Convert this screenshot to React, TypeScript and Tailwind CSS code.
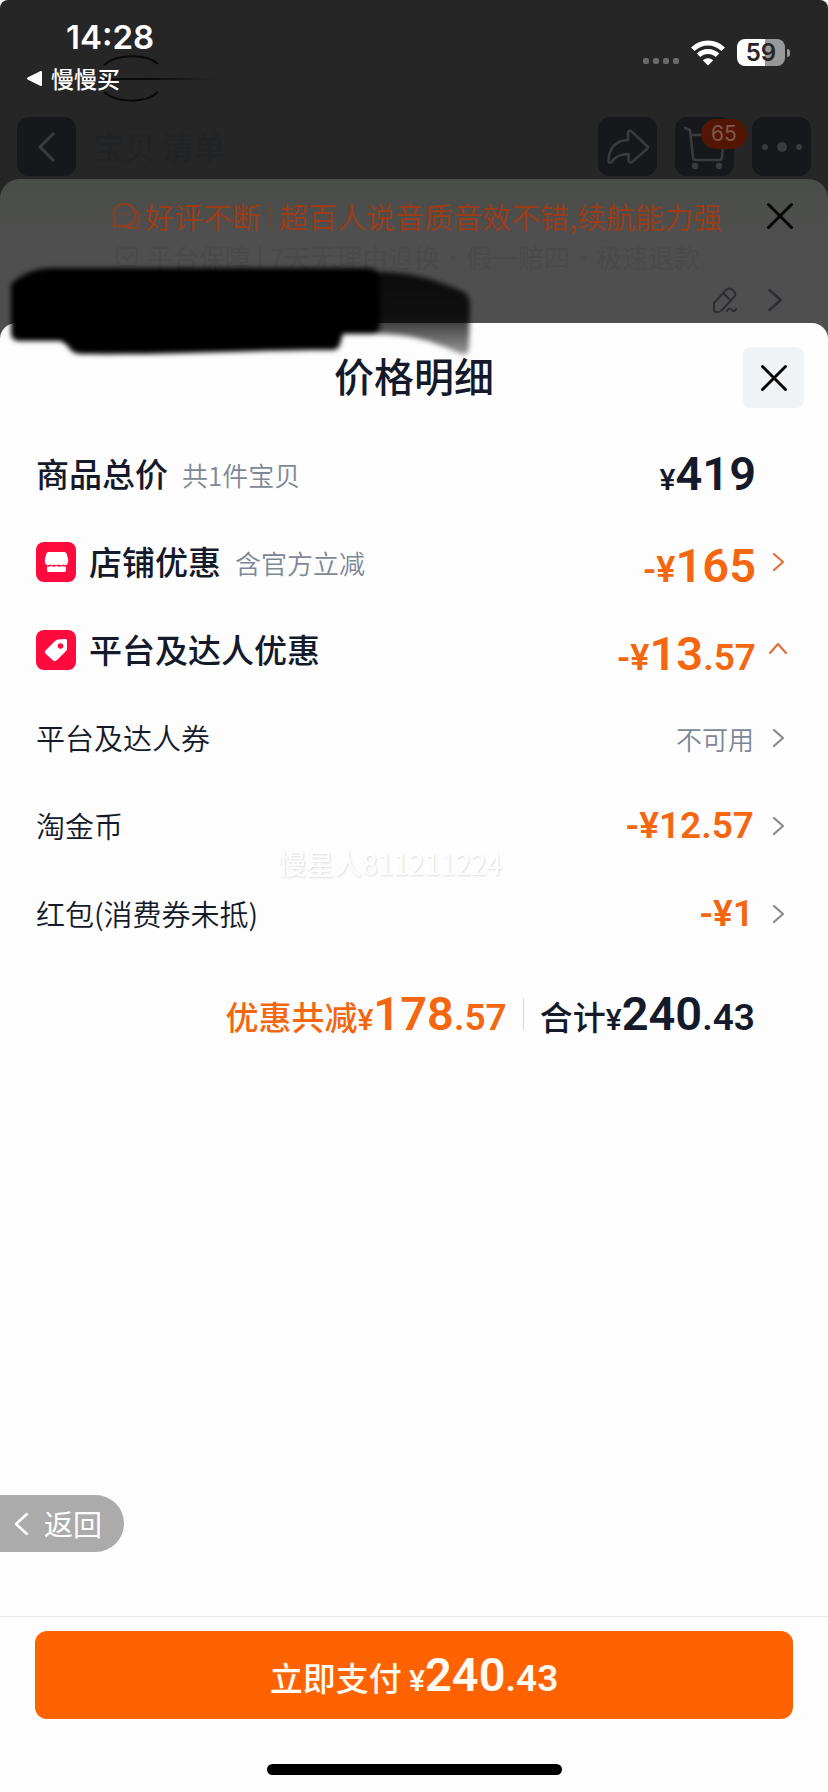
import type { ReactNode } from "react";
import clsx from "clsx";

type PriceProps = {
  sign?: string;
  integer: string;
  decimal?: string;
};

// valor com a parte inteira maior que os centavos
const Price = ({ sign = "¥", integer, decimal }: PriceProps) => (
  <span className="font-['Roboto','Noto_Sans_CJK_SC',sans-serif] font-semibold whitespace-nowrap">
    <span className={sign === "¥" ? "text-[30px] font-medium" : "text-[36px]"}>{sign}</span>
    <span className="text-[47px]">{integer}</span>
    {decimal && <span className="text-[37px]">.{decimal}</span>}
  </span>
);

const Chevron = ({ direction = "right", className }: { direction?: "right" | "up"; className?: string }) => (
  <svg viewBox="0 0 24 24" className={clsx("shrink-0", className)} fill="none" stroke="currentColor" strokeWidth="2.2" strokeLinecap="round" strokeLinejoin="round">
    <path d={direction === "right" ? "M6 4l9 8-9 8" : "M2 15l8-9 8 9"} />
  </svg>
);

const Cross = () => (
  <svg viewBox="0 0 28 28" className="size-7" fill="none" stroke="#050505" strokeWidth="3" strokeLinecap="round">
    <path d="M2.500 2.500l23 23M25.500 2.500l-23 23" />
  </svg>
);

const StatusBar = () => (
  <div className="flex justify-between pl-[26px] pr-[38px] h-[117px] text-white">
    <div>
      <div className="pl-10 pt-[17px] h-[62px] font-['Inter',sans-serif] font-semibold text-[33px] leading-[40px]">14:28</div>
      <a href="#" className="flex items-center gap-2 text-[23px] leading-[32px] font-medium">
        <svg viewBox="0 0 17 17" className="size-[17px]" fill="white" stroke="white" strokeWidth="2" strokeLinejoin="round">
          <path d="M2 8.500L15 2v13z" />
        </svg>
        慢慢买
      </a>
    </div>
    <div className="flex items-center gap-3 h-[27px] mt-[39px]">
      <div className="flex gap-1 pt-[17px]">
        {[0, 1, 2, 3].map((dot) => (
          <span key={dot} className="size-[6px] rounded-xs bg-[#6a6a6a]" />
        ))}
      </div>
      <svg viewBox="0 0 34 26" className="w-[34px] h-[26px]" fill="none" stroke="white" strokeWidth="5">
        <path d="M1.800 9.300a21.500 21.500 0 0 1 30.400 0" />
        <path d="M7.500 15.300a13.500 13.500 0 0 1 19 0" />
        <path d="M17 25.500l-5.200-5.200a7.400 7.400 0 0 1 10.400 0z" fill="white" stroke="none" />
      </svg>
      <div className="flex items-center gap-0.5">
        <div className="flex items-center justify-center w-12 h-[27px] rounded-lg bg-linear-to-r from-white from-58% to-[#989898] to-58% text-[#262626] font-['Inter',sans-serif] font-semibold text-[24px] leading-[27px]">
          59
        </div>
        <span className="w-[3px] h-2 rounded-r-full bg-[#989898]" />
      </div>
    </div>
  </div>
);

const NavButton = ({ label, children }: { label: string; children: ReactNode }) => (
  <button aria-label={label} className="relative flex items-center justify-center size-[59px] rounded-xl bg-[#17181b] text-[#3b3b3d]">
    {children}
  </button>
);

const NavBar = () => (
  <nav className="flex items-center gap-[18px] px-[17px] h-[59px]">
    <NavButton label="后退">
      <svg viewBox="0 0 30 30" className="size-[30px]" fill="none" stroke="currentColor" strokeWidth="3">
        <path d="M22 1L8 15l14 14" />
      </svg>
    </NavButton>
    <span className="flex-1 text-[31px] font-medium text-[#222324]">宝贝 清单</span>
    <NavButton label="分享">
      <svg viewBox="0 0 44 36" className="w-11 h-9" fill="none" stroke="currentColor" strokeWidth="2.500" strokeLinejoin="round">
        <path d="M22 4c0-2 2-3 3.500-1.500L41 17c1 1 1 2 0 3L26 33c-1.500 1-3.500 0-3.500-2v-6c-8 0-13 2-17 8-1 1.500-3 1-3-1C3 19 10 11 22 11z" />
      </svg>
    </NavButton>
    <NavButton label="购物车">
      <svg viewBox="0 0 44 44" className="size-11" fill="none" stroke="currentColor" strokeWidth="2.500" strokeLinecap="round" strokeLinejoin="round">
        <path d="M2 3l5 2 3 27c0 2 1 3 3 3h23c2 0 3-1 3-3l2-20M8 10h32" />
        <circle cx="12" cy="41" r="2" fill="currentColor" />
        <circle cx="36" cy="41" r="2" fill="currentColor" />
      </svg>
      <span className="absolute left-[26px] top-[2px] flex items-center justify-center w-[46px] h-[30px] rounded-full bg-[#541604] text-[#80594a] font-['Inter',sans-serif] text-[21px] leading-[30px]">
        65
      </span>
    </NavButton>
    <NavButton label="更多">
      <span className="flex items-center gap-[9px]">
        <span className="size-[6px] rounded-full bg-current" />
        <span className="size-[10px] rounded-full bg-current" />
        <span className="size-[6px] rounded-full bg-current" />
      </span>
    </NavButton>
  </nav>
);

// cartao do pedido que fica escurecido atras do painel
const OrderCard = () => (
  <section className="h-36 rounded-t-[20px] bg-linear-to-b from-[#494d48] to-[#4f4f4f] to-40%">
    <div className="flex items-center pt-3 h-[62px] pr-[34px] pl-[111px]">
      <div className="flex flex-1 items-center text-[29px] leading-[48px] text-[#983c1a] whitespace-nowrap">
        <svg viewBox="0 0 30 28" className="w-[30px] h-7 mr-1 shrink-0" fill="none" stroke="currentColor" strokeWidth="1.800" strokeLinecap="round" strokeLinejoin="round">
          <path d="M3 25l1-6.500a11 11 0 1 1 5 4.500z" />
          <path d="M25.500 9c3.500 4 3.500 9 1 12.500l.500 5-5-1.500c-3 1.500-6 1.500-9-.500" />
          <path d="M9 12h.1M13.500 12h.1M18 12h.1" strokeWidth="2.200" />
        </svg>
        好评不断
        <span className="w-0.5 h-6 mx-2 bg-[#6b4636]" />
        超百人说音质音效不错,续航能力强
      </div>
      <button aria-label="关闭订单">
        <Cross />
      </button>
    </div>
    <p className="flex items-center gap-2 pl-[115px] text-[26px] leading-[32px] text-[#4a4a4a] whitespace-nowrap">
      <svg viewBox="0 0 24 24" className="size-6" fill="none" stroke="currentColor" strokeWidth="2">
        <path d="M2 3h20v13l-4 5H6l-4-5zM8 11l4 4 5-6" />
      </svg>
      平台保障 | 7天无理由退换·假一赔四·极速退款
    </p>
    <div className="flex items-center justify-end gap-6 pt-3 pr-9 text-[#2d2d33]">
      <svg viewBox="0 0 26 26" className="size-[26px]" fill="none" stroke="currentColor" strokeWidth="2" strokeLinecap="round" strokeLinejoin="round">
        <path d="M2 16L14 3c2-2 4-2 6-.500l2 2c2 2 1.500 4 0 5.500L10 23c-1 1.500-2 2-4 2H4c-1.500 0-2-1-2-2zM11 6l8 8M15 24c2-3 3-3 5-1s3 1 4-1" />
      </svg>
      <Chevron className="size-[30px]" />
    </div>
  </section>
);

// rabisco preto que esconde o endereco
const Scribble = () => (
  <svg viewBox="0 0 480 100" className="absolute left-0 top-[262px] w-[480px] h-[100px] pointer-events-none" aria-hidden="true">
    <defs>
      <filter id="soft" x="-5%" y="-10%" width="110%" height="120%">
        <feGaussianBlur stdDeviation="2.500" />
      </filter>
      <linearGradient id="tail" x1="0" y1="0" x2="0" y2="1">
        <stop offset="0" stopColor="#000" stopOpacity="0.850" />
        <stop offset="0.550" stopColor="#000" stopOpacity="0.800" />
        <stop offset="1" stopColor="#000" stopOpacity="0.400" />
      </linearGradient>
    </defs>
    <g filter="url(#soft)">
      <path d="M370 10c35-1 60 5 92 19 6 3 8 8 8 14l-1 40c0 9-3 11-10 8-30-14-54-20-89-19z" fill="url(#tail)" />
      <path d="M11 22C22 12 34 7 50 6h318c8 0 12 5 12 12v45c0 6-4 9-10 9h-27l-3 10c-1 4-4 6-9 6-80 0-160 5-250 4-6 0-11-3-13-8l-7-5H20c-6 0-9-3-9-8z" fill="#000" />
    </g>
  </svg>
);

const StoreIcon = () => (
  <svg viewBox="0 0 40 40" className="size-10 shrink-0" fill="white">
    <rect width="40" height="40" rx="8" fill="#ff0a3c" />
    <path d="M13 10h15c1.500 0 2 .500 2.500 1.500l1.500 5c.500 3 0 5-1 6-1.500 1-3 1-4 0-1.500 1-3 1-4.500 0-1.500 1-3 1-4.500 0-1.500 1-3 1-4 0-1.500 1-3 1-4 0-1-1-1.500-3-1-6l1.500-5c.500-1 1-1.500 2.500-1.500z" />
    <path d="M11 24.500c2 .500 3 0 4-.500 2 1 4 1 5.500 0 2 1 4 1 5.500 0 1 .500 2.500 1 4 .500V28c0 1.500-.500 2-2 2H13c-1.500 0-2-.500-2-2z" />
  </svg>
);

const TagIcon = () => (
  <svg viewBox="0 0 40 40" className="size-10 shrink-0" fill="white">
    <rect width="40" height="40" rx="8" fill="#ff0a3c" />
    <path d="M22 9.500l7-.500c1.500 0 2 .500 2 2v7.500c0 1-.500 2-1 2.500l-9 9c-1.500 1.500-3 1.500-4.500 0L10 24c-1.500-1.500-1.500-2.500 0-4l9-9c1-1 2-1.500 3-1.500z" />
    <circle cx="24.500" cy="16" r="2.800" fill="#ff0a3c" />
  </svg>
);

type RowProps = {
  icon?: ReactNode;
  label: string;
  note?: string;
  value: ReactNode;
  arrow?: ReactNode;
};

const SummaryRow = ({ icon, label, note, value, arrow }: RowProps) => (
  <li className="flex items-center h-[88px] text-[#141a2a]">
    {icon && <span className="mr-[13px]">{icon}</span>}
    <span className="text-[33px] font-medium">{label}</span>
    {note && <span className="ml-[14px] text-[26px] font-[350] text-[#7d8896]">{note}</span>}
    <span className="ml-auto">{value}</span>
    <span className="ml-3 w-6">{arrow}</span>
  </li>
);

const details = [
  { label: "平台及达人券", value: "" },
  { label: "淘金币", value: "-¥12.57" },
  { label: "红包(消费券未抵)", value: "-¥1" },
];

const DetailRow = ({ label, value }: { label: string; value: string }) => (
  <li className="flex items-center h-[88px] text-[#141a2a]">
    <span className="text-[29px] font-[350]">{label}</span>
    {value ? (
      <span className="ml-auto font-['Roboto',sans-serif] font-semibold text-[37px] text-[#f4660f]">{value}</span>
    ) : (
      <span className="ml-auto text-[26px] font-[350] text-[#7d8896]">不可用</span>
    )}
    <Chevron className="size-6 ml-[14px] text-[#8a8a8c]" />
  </li>
);

const PriceSheet = () => (
  <main className="relative flex flex-col flex-1 rounded-t-[16px] bg-[#fdfdfd]">
    <header className="grid grid-cols-[61px_1fr_61px] items-center px-6 pt-6 pb-[22px]">
      <h1 className="col-start-2 pb-1 text-center text-[40px] leading-[57px] font-medium text-[#141a2a]">价格明细</h1>
      <button aria-label="关闭" className="flex items-center justify-center size-[61px] rounded-lg bg-[#f0f3f6]">
        <Cross />
      </button>
    </header>

    <ul className="px-9">
      <SummaryRow label="商品总价" note="共1件宝贝" value={<Price integer="419" />} />
      <SummaryRow
        icon={<StoreIcon />}
        label="店铺优惠"
        note="含官方立减"
        value={<div className="pt-2 text-[#f4660f]"><Price sign="-¥" integer="165" /></div>}
        arrow={<Chevron className="size-6 text-[#e0703a]" />}
      />
      <SummaryRow
        icon={<TagIcon />}
        label="平台及达人优惠"
        value={<div className="pt-2 text-[#f4660f]"><Price sign="-¥" integer="13" decimal="57" /></div>}
        arrow={<Chevron direction="up" className="size-6 text-[#e0703a]" />}
      />
      {details.map((detail) => (
        <DetailRow key={detail.label} {...detail} />
      ))}
    </ul>

    <div className="flex items-center justify-end h-[88px] mt-3 pr-[73px] text-[33px] font-medium text-[#141a2a] whitespace-nowrap">
      <span className="text-[#f4660f]">优惠共减<Price integer="178" decimal="57" /></span>
      <span className="w-px h-8 mx-4 bg-[#d8d8dc]" />
      <span>合计<Price integer="240" decimal="43" /></span>
    </div>

    <span className="absolute left-[278px] top-[520px] text-[28px] leading-[40px] text-white [text-shadow:1px_1px_2px_#dcdcdc] pointer-events-none">
      慢星人811211224
    </span>

    <button className="flex items-center gap-3 self-start mt-auto mb-16 h-[57px] pl-3 pr-[22px] rounded-r-full bg-[#ababab] text-white text-[29px]">
      <svg viewBox="0 0 20 24" className="w-5 h-6" fill="none" stroke="currentColor" strokeWidth="2.500" strokeLinecap="round" strokeLinejoin="round">
        <path d="M15 2L4 12l11 10" />
      </svg>
      返回
    </button>

    <footer className="border-t border-[#ebe6e6] px-[35px] pt-[14px] pb-[17px]">
      <button className="flex items-center justify-center w-full h-[88px] rounded-xl bg-[#ff6200] text-[#fffaf2] text-[33px] font-medium">
        <span>立即支付 <Price integer="240" decimal="43" /></span>
      </button>
      <div className="w-[295px] h-[11px] mt-[45px] mx-auto rounded-full bg-black" />
    </footer>
  </main>
);

export default function App() {
  return (
    <div className="relative flex flex-col min-h-screen bg-white font-['Noto_Sans_CJK_SC',sans-serif]">
      <div className="relative rounded-t-lg bg-[#262627]">
        {/* arco ao fundo da barra de status */}
        <svg viewBox="0 0 120 48" className="absolute left-[100px] top-[55px] w-[120px] h-12" fill="none" stroke="#090909" strokeWidth="2" aria-hidden="true">
          <defs>
            <linearGradient id="ray" gradientUnits="userSpaceOnUse" x1="0" y1="0" x2="115" y2="0">
              <stop offset="0.4" stopColor="#090909" />
              <stop offset="1" stopColor="#090909" stopOpacity="0" />
            </linearGradient>
          </defs>
          <path d="M4 10c12-11 42-12 54-1M4 37c12 11 42 12 54 0" />
          <path d="M0 24h115" stroke="url(#ray)" />
        </svg>
        <div className="relative">
          <StatusBar />
          <NavBar />
        </div>
        <div className="pt-[3px]">
          <OrderCard />
        </div>
      </div>
      <div className="flex flex-col flex-1 bg-[#4f4f4f]">
        <PriceSheet />
      </div>
      <Scribble />
    </div>
  );
}
